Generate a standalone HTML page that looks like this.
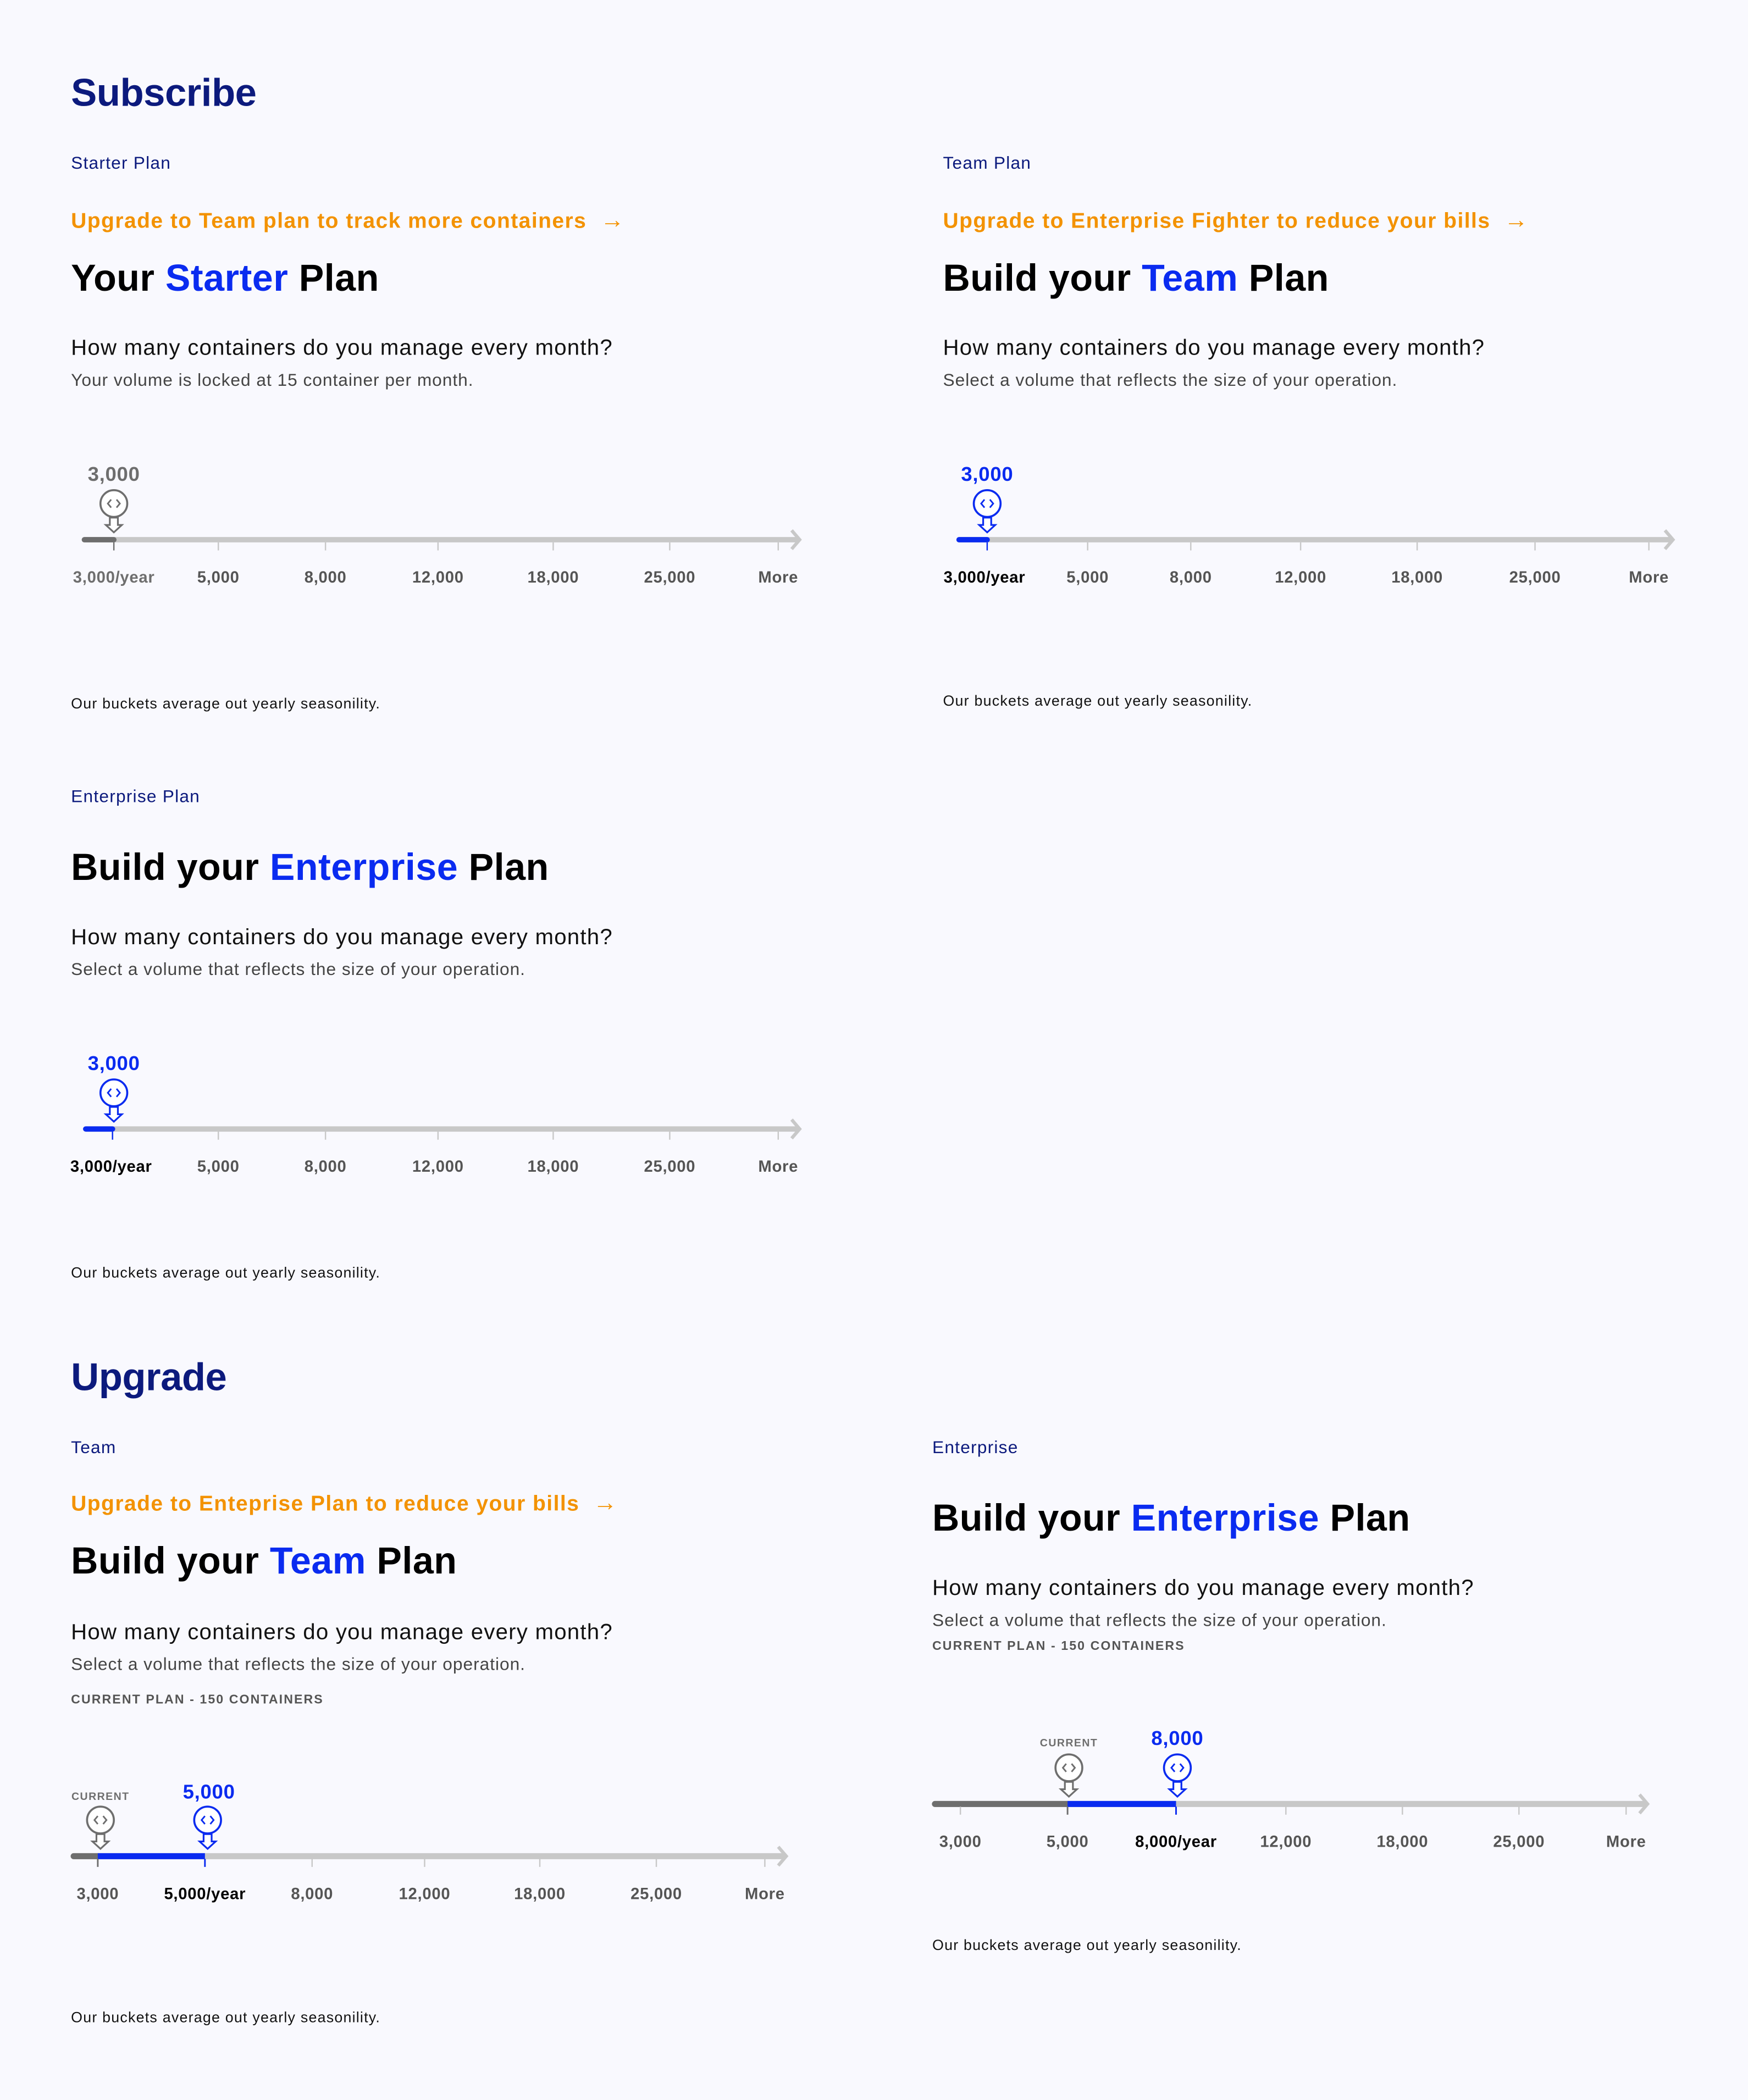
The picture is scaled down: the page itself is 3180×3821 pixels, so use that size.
<!DOCTYPE html>
<html><head><meta charset="utf-8"><style>
html,body{margin:0;padding:0;background:#f9f9fe;}
body{width:3180px;height:3820px;overflow:hidden;position:relative;}
#s{position:absolute;left:0;top:0;width:1305px;height:1568px;transform:scale(2.43678);transform-origin:0 0;font-family:"Liberation Sans",Arial,sans-serif;}
.t{position:absolute;white-space:nowrap;line-height:1;}
.h1{font-size:29px;font-weight:bold;color:#0c1a7d;letter-spacing:-0.2px;}
.lab{font-size:13px;color:#0c1a7d;letter-spacing:0.5px;}
.or{font-size:16px;font-weight:bold;color:#f39200;letter-spacing:0.6px;}
.or span{font-size:18px;line-height:0;}
.h2{font-size:28px;font-weight:bold;color:#000;letter-spacing:0.2px;}
.h2 b{color:#0a2bf0;}
.q{font-size:16.5px;color:#111;letter-spacing:0.5px;}
.sub{font-size:13px;color:#444;letter-spacing:0.4px;}
.cp{font-size:9.5px;font-weight:bold;color:#555;letter-spacing:0.85px;}
.fn{font-size:11px;color:#111;letter-spacing:0.5px;}
svg text{font-family:"Liberation Sans",Arial,sans-serif;}
</style></head><body><div id="s">
<div class="t h1" style="left:53px;top:56px">Subscribe</div>
<div class="t lab" style="left:53px;top:115px">Starter Plan</div>
<div class="t or" style="left:53px;top:158px">Upgrade to Team plan to track more containers &nbsp;<span>→</span></div>
<div class="t h2" style="left:53px;top:194px">Your <b>Starter</b> Plan</div>
<div class="t q" style="left:53px;top:252px">How many containers do you manage every month?</div>
<div class="t sub" style="left:53px;top:277px">Your volume is locked at 15 container per month.</div>
<div class="t fn" style="left:53px;top:521px">Our buckets average out yearly seasonility.</div>

<div class="t lab" style="left:704px;top:115px">Team Plan</div>
<div class="t or" style="left:704px;top:158px">Upgrade to Enterprise Fighter to reduce your bills &nbsp;<span>→</span></div>
<div class="t h2" style="left:704px;top:194px">Build your <b>Team</b> Plan</div>
<div class="t q" style="left:704px;top:252px">How many containers do you manage every month?</div>
<div class="t sub" style="left:704px;top:277px">Select a volume that reflects the size of your operation.</div>
<div class="t fn" style="left:704px;top:519px">Our buckets average out yearly seasonility.</div>

<div class="t lab" style="left:53px;top:588px">Enterprise Plan</div>
<div class="t h2" style="left:53px;top:634px">Build your <b>Enterprise</b> Plan</div>
<div class="t q" style="left:53px;top:692px">How many containers do you manage every month?</div>
<div class="t sub" style="left:53px;top:717px">Select a volume that reflects the size of your operation.</div>
<div class="t fn" style="left:53px;top:946px">Our buckets average out yearly seasonility.</div>

<div class="t h1" style="left:53px;top:1015px">Upgrade</div>
<div class="t lab" style="left:53px;top:1074px">Team</div>
<div class="t or" style="left:53px;top:1116px">Upgrade to Enteprise Plan to reduce your bills &nbsp;<span>→</span></div>
<div class="t h2" style="left:53px;top:1152px">Build your <b>Team</b> Plan</div>
<div class="t q" style="left:53px;top:1211px">How many containers do you manage every month?</div>
<div class="t sub" style="left:53px;top:1236px">Select a volume that reflects the size of your operation.</div>
<div class="t cp" style="left:53px;top:1265px">CURRENT PLAN - 150 CONTAINERS</div>
<div class="t fn" style="left:53px;top:1502px">Our buckets average out yearly seasonility.</div>

<div class="t lab" style="left:696px;top:1074px">Enterprise</div>
<div class="t h2" style="left:696px;top:1120px">Build your <b>Enterprise</b> Plan</div>
<div class="t q" style="left:696px;top:1178px">How many containers do you manage every month?</div>
<div class="t sub" style="left:696px;top:1203px">Select a volume that reflects the size of your operation.</div>
<div class="t cp" style="left:696px;top:1225px">CURRENT PLAN - 150 CONTAINERS</div>
<div class="t fn" style="left:696px;top:1448px">Our buckets average out yearly seasonility.</div>

<svg width="1305" height="1568" style="position:absolute;left:0;top:0" font-weight="bold">
<defs>
<g id="hg"><circle cx="0" cy="-27" r="10" fill="#fff" stroke="#6e6e6e" stroke-width="1.5"/><path d="M-2,-30 L-4.5,-27 L-2,-24 M2,-30 L4.5,-27 L2,-24" fill="none" stroke="#6e6e6e" stroke-width="1.2"/><path d="M-3,-16.5 L3,-16.5 L3,-11 L6,-11 L0,-5.5 L-6,-11 L-3,-11 Z" fill="#fff" stroke="#6e6e6e" stroke-width="1.3"/></g>
<g id="hb"><circle cx="0" cy="-27" r="10" fill="#fff" stroke="#0a2bf0" stroke-width="1.5"/><path d="M-2,-30 L-4.5,-27 L-2,-24 M2,-30 L4.5,-27 L2,-24" fill="none" stroke="#0a2bf0" stroke-width="1.2"/><path d="M-3,-16.5 L3,-16.5 L3,-11 L6,-11 L0,-5.5 L-6,-11 L-3,-11 Z" fill="#fff" stroke="#0a2bf0" stroke-width="1.3"/></g>
</defs>
<g font-size="12" fill="#555" text-anchor="middle" letter-spacing="0.3">
<!-- Starter -->
<line x1="63" y1="403" x2="594" y2="403" stroke="#c8c8c8" stroke-width="4" stroke-linecap="round"/>
<line x1="63" y1="403" x2="85" y2="403" stroke="#6e6e6e" stroke-width="4" stroke-linecap="round"/>
<polyline points="591,396 597,403 591,410" fill="none" stroke="#c8c8c8" stroke-width="2.5"/>
<g stroke="#c8c8c8" stroke-width="1"><line x1="163" y1="405" x2="163" y2="411"/><line x1="243" y1="405" x2="243" y2="411"/><line x1="327" y1="405" x2="327" y2="411"/><line x1="413" y1="405" x2="413" y2="411"/><line x1="500" y1="405" x2="500" y2="411"/><line x1="581" y1="405" x2="581" y2="411"/></g>
<line x1="85" y1="405" x2="85" y2="411" stroke="#6e6e6e"/>
<use href="#hg" x="85" y="403"/>
<text x="85" y="359" font-size="15" fill="#6e6e6e">3,000</text>
<text x="85" y="435" fill="#6e6e6e">3,000/year</text><text x="163" y="435">5,000</text><text x="243" y="435">8,000</text><text x="327" y="435">12,000</text><text x="413" y="435">18,000</text><text x="500" y="435">25,000</text><text x="581" y="435">More</text>
<!-- Team -->
<line x1="716" y1="403" x2="1246" y2="403" stroke="#c8c8c8" stroke-width="4" stroke-linecap="round"/>
<line x1="716" y1="403" x2="737" y2="403" stroke="#0a2bf0" stroke-width="4" stroke-linecap="round"/>
<polyline points="1243,396 1249,403 1243,410" fill="none" stroke="#c8c8c8" stroke-width="2.5"/>
<g stroke="#c8c8c8" stroke-width="1"><line x1="812" y1="405" x2="812" y2="411"/><line x1="889" y1="405" x2="889" y2="411"/><line x1="971" y1="405" x2="971" y2="411"/><line x1="1058" y1="405" x2="1058" y2="411"/><line x1="1146" y1="405" x2="1146" y2="411"/><line x1="1231" y1="405" x2="1231" y2="411"/></g>
<line x1="737" y1="405" x2="737" y2="411" stroke="#0a2bf0"/>
<use href="#hb" x="737" y="403"/>
<text x="737" y="359" font-size="15" fill="#0a2bf0">3,000</text>
<text x="735" y="435" fill="#000">3,000/year</text><text x="812" y="435">5,000</text><text x="889" y="435">8,000</text><text x="971" y="435">12,000</text><text x="1058" y="435">18,000</text><text x="1146" y="435">25,000</text><text x="1231" y="435">More</text>
<!-- Enterprise -->
<line x1="64" y1="843" x2="594" y2="843" stroke="#c8c8c8" stroke-width="4" stroke-linecap="round"/>
<line x1="64" y1="843" x2="84" y2="843" stroke="#0a2bf0" stroke-width="4" stroke-linecap="round"/>
<polyline points="591,836 597,843 591,850" fill="none" stroke="#c8c8c8" stroke-width="2.5"/>
<g stroke="#c8c8c8" stroke-width="1"><line x1="163" y1="845" x2="163" y2="851"/><line x1="243" y1="845" x2="243" y2="851"/><line x1="327" y1="845" x2="327" y2="851"/><line x1="413" y1="845" x2="413" y2="851"/><line x1="500" y1="845" x2="500" y2="851"/><line x1="581" y1="845" x2="581" y2="851"/></g>
<line x1="84" y1="845" x2="84" y2="851" stroke="#0a2bf0"/>
<use href="#hb" x="85" y="843"/>
<text x="85" y="799" font-size="15" fill="#0a2bf0">3,000</text>
<text x="83" y="875" fill="#000">3,000/year</text><text x="163" y="875">5,000</text><text x="243" y="875">8,000</text><text x="327" y="875">12,000</text><text x="413" y="875">18,000</text><text x="500" y="875">25,000</text><text x="581" y="875">More</text>
<!-- Upgrade Team -->
<line x1="55" y1="1386" x2="584" y2="1386" stroke="#c8c8c8" stroke-width="4.5" stroke-linecap="round"/>
<line x1="55" y1="1386" x2="73" y2="1386" stroke="#6e6e6e" stroke-width="4.5" stroke-linecap="round"/>
<line x1="73" y1="1386" x2="153" y2="1386" stroke="#0a2bf0" stroke-width="4.5"/>
<polyline points="581,1379 587,1386 581,1393" fill="none" stroke="#c8c8c8" stroke-width="2.5"/>
<g stroke="#c8c8c8" stroke-width="1"><line x1="233" y1="1388" x2="233" y2="1394"/><line x1="317" y1="1388" x2="317" y2="1394"/><line x1="403" y1="1388" x2="403" y2="1394"/><line x1="490" y1="1388" x2="490" y2="1394"/><line x1="571" y1="1388" x2="571" y2="1394"/></g>
<line x1="73" y1="1388" x2="73" y2="1394" stroke="#6e6e6e" stroke-width="1.2"/>
<line x1="153" y1="1388" x2="153" y2="1394" stroke="#0a2bf0" stroke-width="1.2"/>
<use href="#hg" x="75" y="1386"/><use href="#hb" x="155" y="1386"/>
<text x="75" y="1344" font-size="8" fill="#6e6e6e" letter-spacing="0.6">CURRENT</text>
<text x="156" y="1343" font-size="15" fill="#0a2bf0">5,000</text>
<text x="73" y="1418">3,000</text><text x="153" y="1418" fill="#000">5,000/year</text><text x="233" y="1418">8,000</text><text x="317" y="1418">12,000</text><text x="403" y="1418">18,000</text><text x="490" y="1418">25,000</text><text x="571" y="1418">More</text>
<!-- Upgrade Enterprise -->
<line x1="698" y1="1347" x2="1227" y2="1347" stroke="#c8c8c8" stroke-width="4.5" stroke-linecap="round"/>
<line x1="698" y1="1347" x2="797" y2="1347" stroke="#6e6e6e" stroke-width="4.5" stroke-linecap="round"/>
<line x1="797" y1="1347" x2="878" y2="1347" stroke="#0a2bf0" stroke-width="4.5"/>
<polyline points="1224,1340 1230,1347 1224,1354" fill="none" stroke="#c8c8c8" stroke-width="2.5"/>
<g stroke="#c8c8c8" stroke-width="1"><line x1="717" y1="1349" x2="717" y2="1355"/><line x1="960" y1="1349" x2="960" y2="1355"/><line x1="1047" y1="1349" x2="1047" y2="1355"/><line x1="1134" y1="1349" x2="1134" y2="1355"/><line x1="1214" y1="1349" x2="1214" y2="1355"/></g>
<line x1="797" y1="1349" x2="797" y2="1355" stroke="#6e6e6e" stroke-width="1.2"/>
<line x1="878" y1="1349" x2="878" y2="1355" stroke="#0a2bf0" stroke-width="1.2"/>
<use href="#hg" x="798" y="1347"/><use href="#hb" x="879" y="1347"/>
<text x="798" y="1304" font-size="8" fill="#6e6e6e" letter-spacing="0.6">CURRENT</text>
<text x="879" y="1303" font-size="15" fill="#0a2bf0">8,000</text>
<text x="717" y="1379">3,000</text><text x="797" y="1379">5,000</text><text x="878" y="1379" fill="#000">8,000/year</text><text x="960" y="1379">12,000</text><text x="1047" y="1379">18,000</text><text x="1134" y="1379">25,000</text><text x="1214" y="1379">More</text>
</g>
</svg>
</div></body></html>
